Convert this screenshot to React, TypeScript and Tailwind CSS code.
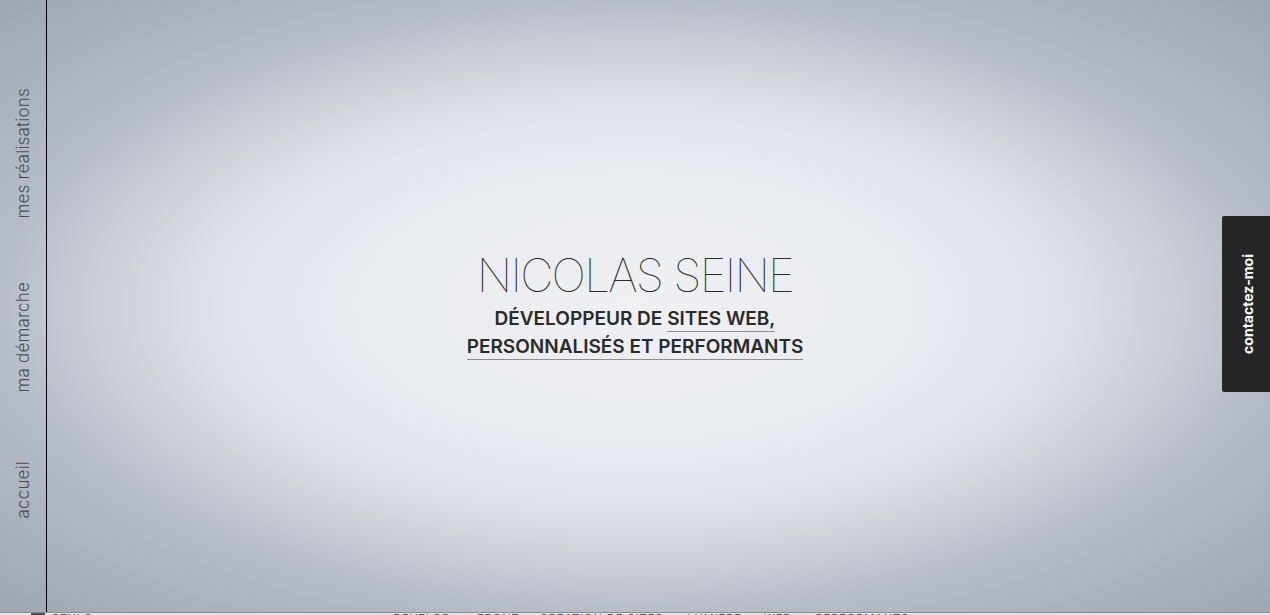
import { ReactNode } from 'react';

function NavItem({ children, className = '' }: { children: ReactNode; className?: string }) {
  return (
    <a className={`[writing-mode:vertical-rl] rotate-180 text-[17px] font-light tracking-[0.2px] text-[#4a4d52] leading-none ${className}`}>
      {children}
    </a>
  );
}

export default function App() {
  return (
    <div className="h-[615px] w-full overflow-hidden bg-[#e4e4e4] font-['Inter','Liberation_Sans',sans-serif]">
      {/* Hero */}
      <section className="relative h-[613px] w-full bg-[radial-gradient(ellipse_at_center,#eff0f2_0%,#e7eaef_33%,#dde2e9_47%,#ccd1d9_59%,#b6bcc7_71%,#9fa5b1_100%)] border-b border-[#8c8c8c]">
        {/* Side nav */}
        <nav className="absolute left-0 top-0 h-full w-[47px] border-r border-black flex flex-col items-center pl-[1px] pt-[88px] gap-[63px]">
          <NavItem>mes réalisations</NavItem>
          <NavItem>ma démarche</NavItem>
          <NavItem className="mt-[6px]">accueil</NavItem>
        </nav>

        <div className="h-full flex flex-col items-center justify-center">
          <h1 className="text-[46px] font-thin leading-none tracking-[-1.8px] text-[#2b2b2b]">NICOLAS SEINE</h1>
          <p className="mt-[7px] text-center text-[19px] font-semibold leading-[28px] text-[#2a2a2a] uppercase">
            Développeur de{' '}
            <span className="border-b border-[#8e8e8e] pb-[1px]">sites web,</span>
            <br />
            <span className="border-b border-[#8e8e8e] pb-[1px]">personnalisés et performants</span>
          </p>
        </div>

        {/* Contact tab */}
        <a className="absolute right-0 top-[216px] h-[176px] w-[48px] bg-[#262626] rounded-l-[2px] flex items-center justify-center pl-[4px]">
          <span className="[writing-mode:vertical-rl] rotate-180 text-white text-[14px] font-bold leading-none">contactez-moi</span>
        </a>
      </section>

      {/* Next section peeking */}
      <div className="flex items-start h-[2px] text-[11px] leading-none text-[#555] uppercase tracking-[1px]">
        <div className="ml-[31px] w-[14px] h-[2px] bg-[#4a5055]" />
        <span className="ml-[7px]">stylo</span>
        <span className="ml-[300px]">Dévelop</span>
        <span className="ml-[27px]">Front</span>
        <span className="ml-[20px]">Création de sites</span>
        <span className="ml-[24px]">Lumière</span>
        <span className="ml-[22px]">Web</span>
        <span className="ml-[24px]">Performants</span>
      </div>
    </div>
  );
}
